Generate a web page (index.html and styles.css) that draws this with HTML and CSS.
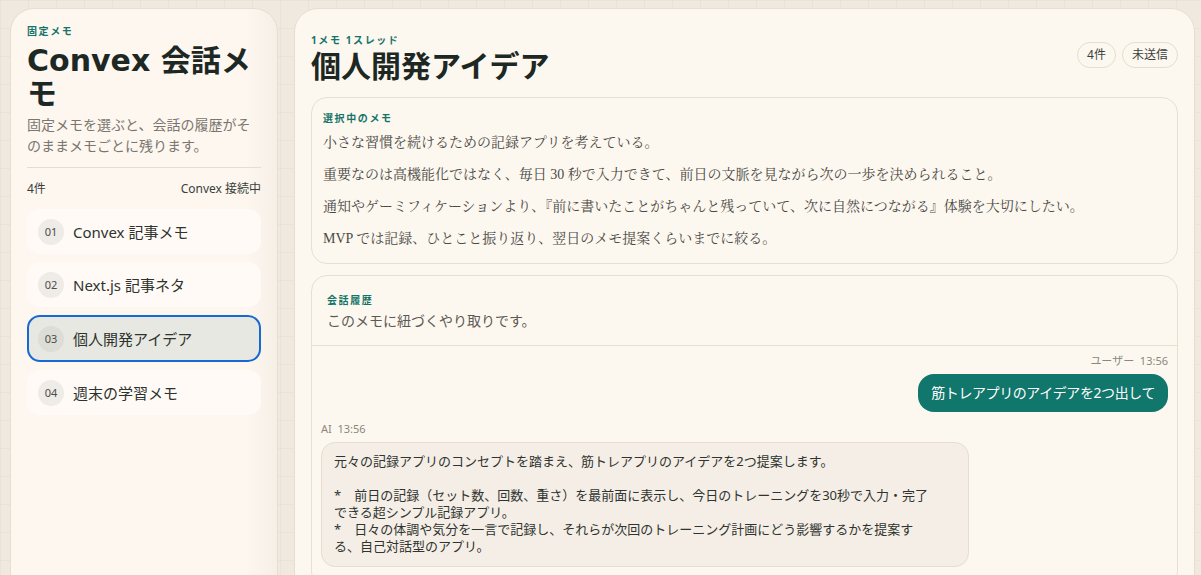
FILE: index.html
```html
<!DOCTYPE html>
<html lang="ja">
<head>
  <meta charset="utf-8">
  <title>Convex 会話メモ</title>
  <link rel="stylesheet" href="styles.css">
</head>
<body>
  <div class="layout">
    <!-- 固定メモ一覧 -->
    <aside class="sidebar">
      <p class="eyebrow">固定メモ</p>
      <h1 class="side-title">Convex 会話メモ</h1>
      <p class="side-desc">固定メモを選ぶと、会話の履歴がそのままメモごとに残ります。</p>
      <div class="side-meta">
        <span>4件</span>
        <span>Convex 接続中</span>
      </div>
      <ul class="memo-list">
        <li class="memo-item"><span class="memo-num">01</span><span>Convex 記事メモ</span></li>
        <li class="memo-item"><span class="memo-num">02</span><span>Next.js 記事ネタ</span></li>
        <li class="memo-item active"><span class="memo-num">03</span><span>個人開発アイデア</span></li>
        <li class="memo-item"><span class="memo-num">04</span><span>週末の学習メモ</span></li>
      </ul>
    </aside>

    <!-- 選択中のメモとスレッド -->
    <main class="main">
      <header class="main-head">
        <div>
          <p class="eyebrow">1メモ 1スレッド</p>
          <h2 class="main-title">個人開発アイデア</h2>
        </div>
        <div class="badges">
          <span class="badge">4件</span>
          <span class="badge">未送信</span>
        </div>
      </header>

      <section class="card memo-card">
        <p class="eyebrow">選択中のメモ</p>
        <div class="memo-body">
          <p>小さな習慣を続けるための記録アプリを考えている。</p>
          <p>重要なのは高機能化ではなく、毎日 30 秒で入力できて、前日の文脈を見ながら次の一歩を決められること。</p>
          <p>通知やゲーミフィケーションより、『前に書いたことがちゃんと残っていて、次に自然につながる』体験を大切にしたい。</p>
          <p>MVP では記録、ひとこと振り返り、翌日のメモ提案くらいまでに絞る。</p>
        </div>
      </section>

      <section class="card chat-card">
        <div class="chat-head">
          <p class="eyebrow">会話履歴</p>
          <p class="chat-desc">このメモに紐づくやり取りです。</p>
        </div>
        <div class="messages">
          <div class="msg user">
            <span class="msg-meta">ユーザー&nbsp;&nbsp;13:56</span>
            <div class="bubble">筋トレアプリのアイデアを2つ出して</div>
          </div>
          <div class="msg ai">
            <span class="msg-meta">AI&nbsp;&nbsp;13:56</span>
            <div class="bubble">元々の記録アプリのコンセプトを踏まえ、筋トレアプリのアイデアを2つ提案します。

*　前日の記録（セット数、回数、重さ）を最前面に表示し、今日のトレーニングを30秒で入力・完了できる超シンプル記録アプリ。
*　日々の体調や気分を一言で記録し、それらが次回のトレーニング計画にどう影響するかを提案する、自己対話型のアプリ。</div>
          </div>
        </div>
      </section>
    </main>
  </div>
</body>
</html>
```

FILE: styles.css
```css
/* Styles CSS */
* {
  box-sizing: border-box;
}

body {
  margin: 0;
  height: 575px;
  overflow: hidden;
  font-family: "Noto Sans", "Noto Sans CJK JP", sans-serif;
  color: #26302c;
  background-color: #efe9df;
  background-image:
    linear-gradient(rgba(0, 0, 0, 0.022) 1px, transparent 1px),
    linear-gradient(90deg, rgba(0, 0, 0, 0.022) 1px, transparent 1px);
  background-size: 28px 28px;
}

p {
  margin: 0;
}

.layout {
  display: grid;
  grid-template-columns: 268px 1fr;
  gap: 16px;
  padding: 8px 6px 0 10px;
}

.eyebrow {
  font-size: 10px;
  line-height: 14px;
  font-weight: 700;
  letter-spacing: 0.16em;
  color: #157469;
}

/* Colonne de gauche */
.sidebar {
  height: 600px;
  padding: 15px 16px;
  border: 1px solid #e6ded1;
  border-radius: 24px;
  background: linear-gradient(90deg, #fdf7f0 88%, #f6efe6 100%);
}

.side-title {
  margin: 6px 0 4px;
  font-family: "DejaVu Sans", "Noto Sans CJK JP", sans-serif;
  font-size: 30px;
  line-height: 33px;
  font-weight: 700;
  color: #1d2824;
}

.side-desc {
  font-size: 14px;
  line-height: 21px;
  color: #7a766f;
  padding-bottom: 11px;
  border-bottom: 1px solid #e3ddd3;
}

.side-meta {
  display: flex;
  justify-content: space-between;
  margin: 11px 0 12px;
  font-size: 12px;
  color: #3a3f3c;
}

.memo-list {
  list-style: none;
  margin: 0;
  padding: 0;
  display: flex;
  flex-direction: column;
  gap: 8px;
}

.memo-item {
  display: flex;
  align-items: center;
  gap: 9px;
  height: 45px;
  padding: 0 9px;
  border: 2px solid transparent;
  border-radius: 13px;
  background-color: #fffaf5;
  font-size: 15px;
  color: #2d332f;
}

.memo-item.active {
  height: 47px;
  border-color: #1668d4;
  background-color: #e7e8e1;
}

.memo-num {
  display: inline-flex;
  align-items: center;
  justify-content: center;
  width: 26px;
  height: 26px;
  border-radius: 50%;
  background-color: #efebe6;
  font-size: 11px;
  color: #4a4d4a;
}

.memo-item.active .memo-num {
  background-color: #dcddd6;
}

/* Zone principale */
.main {
  height: 600px;
  padding: 24px 16px 0 16px;
  border: 1px solid #e6ded1;
  border-radius: 24px;
  background-color: #fdf8ef;
}

.main-head {
  display: flex;
  justify-content: space-between;
  align-items: flex-start;
  margin-bottom: 15px;
}

.main-head .eyebrow {
  margin-bottom: 3px;
}

.main-title {
  margin: 0;
  font-size: 30px;
  line-height: 32px;
  font-weight: 700;
  color: #1d2824;
}

.badges {
  display: flex;
  gap: 6px;
  margin-top: 9px;
}

.badge {
  padding: 4px 9px;
  border: 1px solid #e4ddd1;
  border-radius: 999px;
  font-size: 12px;
  line-height: 16px;
  color: #3a3f3c;
}

.card {
  border: 1px solid #e6dfd2;
  border-radius: 16px;
  background-color: #fdf8ef;
}

.memo-card {
  padding: 13px 11px 14px;
  margin-bottom: 11px;
}

.memo-body {
  margin-top: 7px;
  font-family: "Liberation Serif", "Noto Serif CJK JP", serif;
  font-size: 14px;
  color: #4a4946;
}

.memo-body p {
  line-height: 21px;
  margin: 0 0 11px;
}

.memo-body p:last-child {
  margin-bottom: 0;
}

.chat-head {
  padding: 17px 15px 14px;
  border-bottom: 1px solid #e6dfd2;
}

.chat-desc {
  margin-top: 4px;
  font-size: 14px;
  line-height: 20px;
  color: #5d5a55;
}

.messages {
  padding: 8px 9px 20px;
  display: flex;
  flex-direction: column;
  gap: 10px;
}

.msg {
  display: flex;
  flex-direction: column;
  gap: 6px;
}

.msg.user {
  align-items: flex-end;
}

.msg.ai {
  align-items: flex-start;
}

.msg-meta {
  font-size: 11px;
  line-height: 14px;
  color: #8a8782;
}

.msg.user .bubble {
  padding: 9px 13px 10px;
  border-radius: 16px;
  background-color: #11766b;
  color: #fff;
  font-size: 14px;
  line-height: 19px;
  letter-spacing: -0.03em;
}

.msg.ai .bubble {
  width: 648px;
  padding: 10px 30px 11px 12px;
  border: 1px solid #e5ddd1;
  border-radius: 14px;
  background-color: #f4eee6;
  color: #2f3430;
  font-size: 13px;
  line-height: 17px;
  white-space: pre-wrap;
}
```
